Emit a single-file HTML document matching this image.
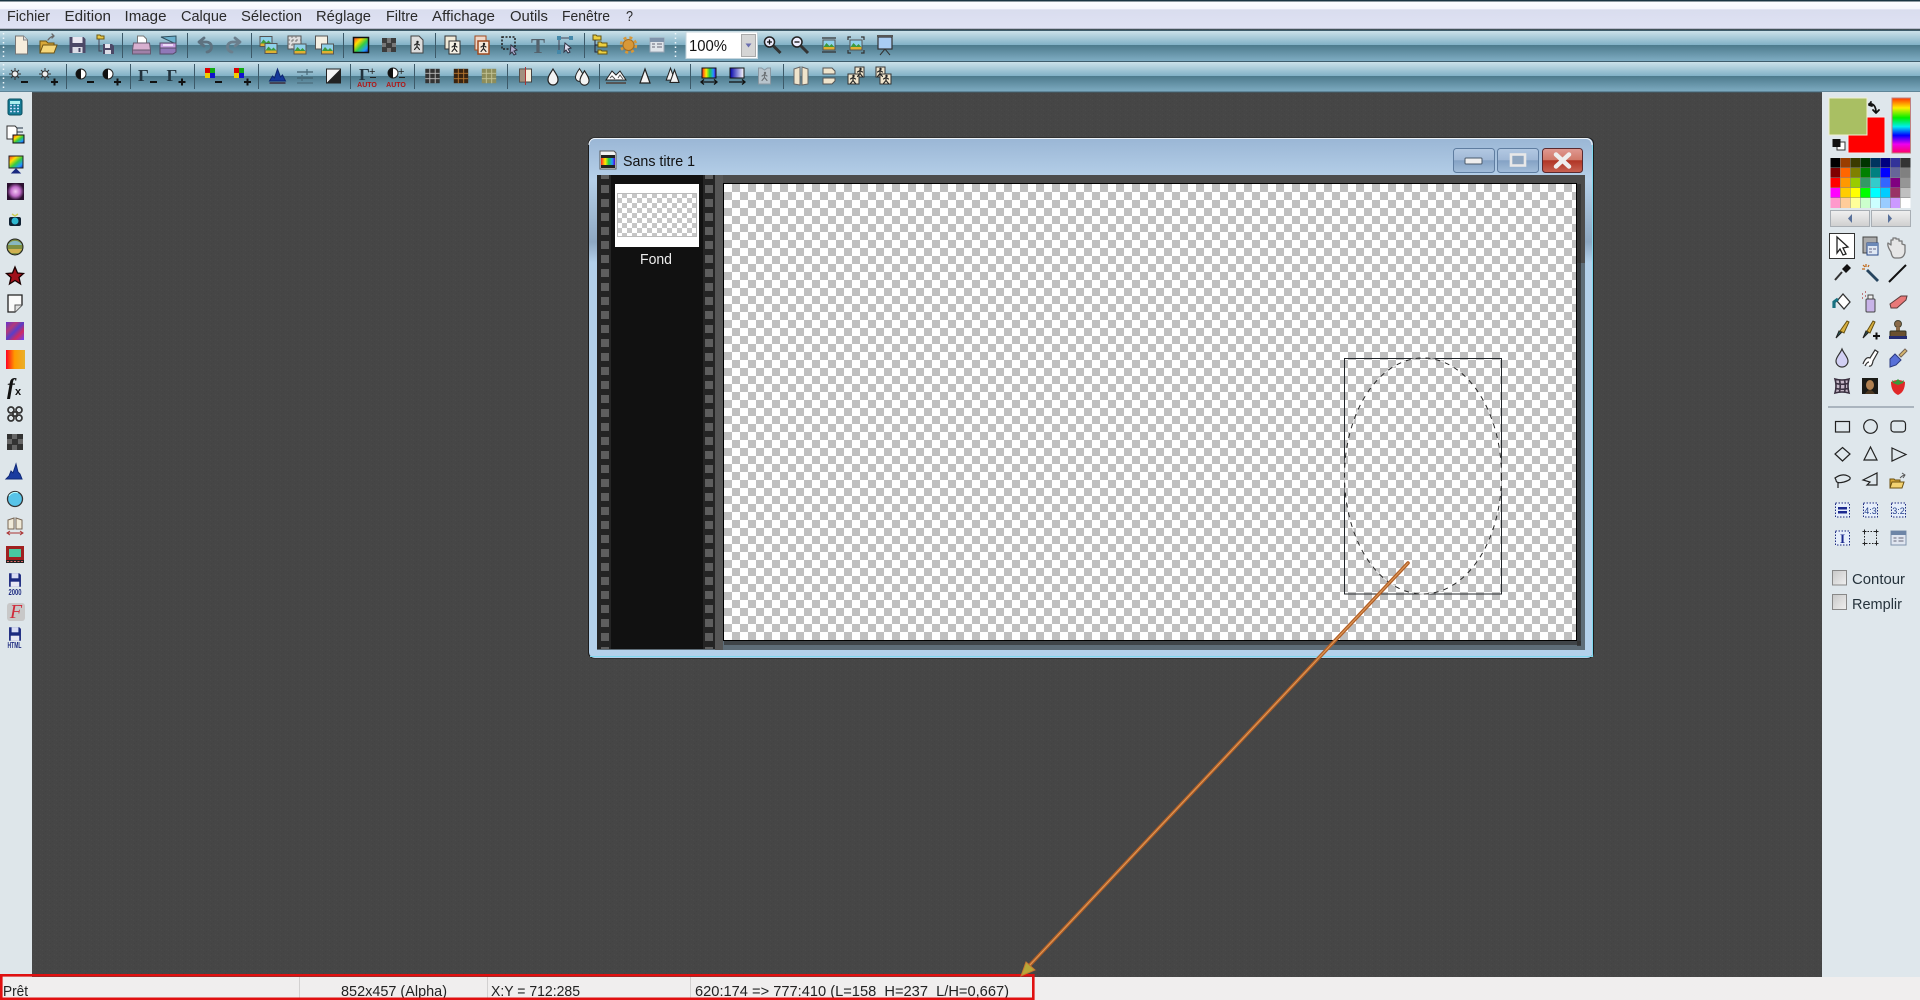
<!DOCTYPE html>
<html lang="fr">
<head>
<meta charset="utf-8">
<title>Sans titre 1</title>
<style>
html,body{margin:0;padding:0;background:#464646;width:1920px;height:1000px;overflow:hidden}
svg{display:block}
text{font-family:"Liberation Sans",sans-serif}
.m{font-size:14.5px;fill:#2a2a2a}
.s{font-size:15px;fill:#222}
.l{fill:none;stroke-linecap:round;stroke-linejoin:round}
</style>
</head>
<body>
<svg xmlns="http://www.w3.org/2000/svg" width="1920" height="1000" viewBox="0 0 1920 1000">
<defs>
<pattern id="noise" width="7" height="5" patternUnits="userSpaceOnUse">
<rect width="7" height="5" fill="#464646"/>
<rect x="0" y="0" width="1" height="1" fill="#4a4a4a"/><rect x="3" y="1" width="1" height="1" fill="#434343"/>
<rect x="1" y="3" width="1" height="1" fill="#434343"/><rect x="5" y="4" width="1" height="1" fill="#4a4a4a"/>
</pattern>
<pattern id="chk" x="724" y="184" width="16" height="16" patternUnits="userSpaceOnUse">
<rect width="16" height="16" fill="#fff"/><rect x="8" width="8" height="8" fill="#c0c0c0"/><rect y="8" width="8" height="8" fill="#c0c0c0"/>
</pattern>
<pattern id="chk2" x="617" y="193" width="10" height="10" patternUnits="userSpaceOnUse">
<rect width="10" height="10" fill="#fff"/><rect x="5" width="5" height="5" fill="#c6c6c6"/><rect y="5" width="5" height="5" fill="#c6c6c6"/>
</pattern>
<pattern id="rail" x="597" y="175" width="14" height="14" patternUnits="userSpaceOnUse">
<rect width="14" height="14" fill="#242424"/><rect x="4" y="10" width="8" height="8" fill="#5e5e5e"/><rect x="4" y="-4" width="8" height="8" fill="#5e5e5e"/>
</pattern>
<pattern id="rail2" x="703" y="175" width="12" height="14" patternUnits="userSpaceOnUse">
<rect width="12" height="14" fill="#242424"/><rect x="2" y="10" width="8" height="8" fill="#5e5e5e"/><rect x="2" y="-4" width="8" height="8" fill="#5e5e5e"/>
</pattern>
<linearGradient id="tbA" x1="0" y1="0" x2="0" y2="1"><stop offset="0" stop-color="#cbe1e9"/><stop offset="1" stop-color="#82b1c6"/></linearGradient>
<linearGradient id="tbB" x1="0" y1="0" x2="0" y2="1"><stop offset="0" stop-color="#4d7a8c"/><stop offset="1" stop-color="#7fadc3"/></linearGradient>
<linearGradient id="menu" x1="0" y1="0" x2="0" y2="1"><stop offset="0" stop-color="#fff"/><stop offset=".3" stop-color="#f6f7fc"/><stop offset=".34" stop-color="#d9ddee"/><stop offset="1" stop-color="#e0e2f4"/></linearGradient>
<linearGradient id="win" x1="0" y1="0" x2="0" y2="1"><stop offset="0" stop-color="#9ab6d5"/><stop offset=".08" stop-color="#b6d0e9"/><stop offset=".2" stop-color="#8ea8c2"/><stop offset=".24" stop-color="#b3d0ea"/><stop offset="1" stop-color="#b4d1eb"/></linearGradient>
<linearGradient id="rb" x1="0" y1="0" x2="1" y2="1"><stop offset="0" stop-color="#f33"/><stop offset=".3" stop-color="#fd0"/><stop offset=".55" stop-color="#3c4"/><stop offset=".8" stop-color="#29f"/><stop offset="1" stop-color="#22a"/></linearGradient>
<linearGradient id="rbh" x1="0" y1="0" x2="1" y2="0"><stop offset="0" stop-color="#f22"/><stop offset=".3" stop-color="#fe0"/><stop offset=".55" stop-color="#2c4"/><stop offset=".8" stop-color="#29f"/><stop offset="1" stop-color="#50c"/></linearGradient>
<linearGradient id="hue" x1="0" y1="0" x2="0" y2="1"><stop offset="0" stop-color="#f30"/><stop offset=".18" stop-color="#fe0"/><stop offset=".36" stop-color="#0e0"/><stop offset=".52" stop-color="#0ee"/><stop offset=".68" stop-color="#00f"/><stop offset=".84" stop-color="#e0e"/><stop offset="1" stop-color="#f06"/></linearGradient>
<linearGradient id="org" x1="0" y1="0" x2="1" y2="0"><stop offset="0" stop-color="#f02"/><stop offset=".45" stop-color="#f90"/><stop offset="1" stop-color="#e8b02c"/></linearGradient>
<linearGradient id="pur" x1="0" y1="0" x2="1" y2="1"><stop offset="0" stop-color="#63c"/><stop offset=".3" stop-color="#b23a7a"/><stop offset=".5" stop-color="#5a3ec8"/><stop offset=".72" stop-color="#d02a60"/><stop offset="1" stop-color="#64f"/></linearGradient>
<linearGradient id="bl" x1="0" y1="0" x2="1" y2="0"><stop offset="0" stop-color="#00a"/><stop offset="1" stop-color="#fff"/></linearGradient>
<radialGradient id="glow"><stop offset="0" stop-color="#f4c8f4"/><stop offset=".55" stop-color="#c06cc8"/><stop offset="1" stop-color="#2b1030"/></radialGradient>
<linearGradient id="btn" x1="0" y1="0" x2="0" y2="1"><stop offset="0" stop-color="#b3c9e2"/><stop offset=".48" stop-color="#a0b8d6"/><stop offset=".5" stop-color="#84a2c4"/><stop offset="1" stop-color="#a3bdd9"/></linearGradient>
<linearGradient id="cls" x1="0" y1="0" x2="0" y2="1"><stop offset="0" stop-color="#e09a92"/><stop offset=".48" stop-color="#d07868"/><stop offset=".5" stop-color="#b03424"/><stop offset="1" stop-color="#c86454"/></linearGradient>
<linearGradient id="gbtn" x1="0" y1="0" x2="0" y2="1"><stop offset="0" stop-color="#f0f0f0"/><stop offset="1" stop-color="#cfcfcf"/></linearGradient>
<linearGradient id="cb" x1="0" y1="0" x2="1" y2="1"><stop offset="0" stop-color="#c8c8c8"/><stop offset="1" stop-color="#f0f0f0"/></linearGradient>

<g id="land"><rect x="-6" y="-5" width="12" height="10" fill="#8fd0ea" stroke="#555"/><path d="M-5.500 2l3-4 3 3 2-2 3 3v2.500h-11z" fill="#3d9a3d"/><rect x="-5.500" y="2" width="11" height="2.500" fill="#e0b030"/></g>
<g id="man"><circle cx="0.500" cy="-4" r="1.200" fill="#222"/><path class="l" d="M0-2.500v3l2.500 3M0 .5l-2.500 3M-2.500-1l2.500-1.500 2.500 1.500" stroke="#222" stroke-width="1.100"/></g>
<g id="floppy"><path d="M-7-8h12l2 2v14h-14z" fill="#1c2a80"/><rect x="-4" y="-8" width="8" height="6" fill="#d8dcf4"/><rect x="-5" y="2" width="10" height="6" fill="#e8e8f4"/></g>
<g id="sun"><circle cx="-3" cy="-2" r="3" fill="#eee" stroke="#333"/><path d="M-3-8v2.500M-3 1.500v2.500M-9-2h2.500M.5-2h2.500M-7-6l2 2M-1 0l2 2M-7 2l2-2M-1-4l2-2" stroke="#333"/></g>
<g id="half"><circle cx="-3" cy="-2" r="5" fill="#fff" stroke="#222"/><path d="M-3-7a5 5 0 0 0 0 10z" fill="#111"/></g>
<g id="gam"><text x="-9" y="5" font-size="17" font-weight="bold" fill="#22323c" style="font-family:'Liberation Serif',serif">Γ</text></g>
<g id="rgb"><rect x="-7" y="-8" width="5" height="5" fill="#d00"/><rect x="-2" y="-8" width="5" height="5" fill="#1a1"/><rect x="-7" y="-3" width="5" height="5" fill="#ec0"/><rect x="-2" y="-3" width="5" height="5" fill="#11c"/></g>
<g id="minus"><rect x="3" y="5" width="7" height="2" fill="#111"/></g>
<g id="plus"><path d="M3 6h7M6.500 2.500v7" stroke="#111" stroke-width="2"/></g>
<g id="grid"><rect x="-8" y="-8" width="16" height="16" fill="#333"/><path d="M-8-3h16M-8 3h16M-3-8v16M3-8v16" stroke="#bbb" stroke-width="1"/></g>
<g id="drop"><path d="M0-8C3-3 5-1 5 3a5 5 0 0 1-10 0C-5-1-3-3 0-8z" fill="#f4f4f4" stroke="#222" stroke-width="1.200"/></g>
<g id="tri"><path d="M0-8L5 6h-10z" fill="#f4f4f4" stroke="#222" stroke-width="1.200"/></g>
<g id="grip"><line x1="3.500" y1="33" x2="3.500" y2="59" stroke="#eef6fa" stroke-width="1.500" stroke-dasharray="1.500 3"/></g>
</defs>

<!-- background -->
<rect width="1920" height="1000" fill="url(#noise)"/>

<!-- menu -->
<rect y="0" width="1920" height="29" fill="url(#menu)"/>
<rect y="0" width="1920" height="1.500" fill="#1a3540"/>
<rect y="28" width="1920" height="1" fill="#b6bacb"/>
<text class="m" x="7" y="21" textLength="43" lengthAdjust="spacingAndGlyphs">Fichier</text>
<text class="m" x="64.500" y="21" textLength="46.500" lengthAdjust="spacingAndGlyphs">Edition</text>
<text class="m" x="124.500" y="21" textLength="42" lengthAdjust="spacingAndGlyphs">Image</text>
<text class="m" x="181" y="21" textLength="46" lengthAdjust="spacingAndGlyphs">Calque</text>
<text class="m" x="241" y="21" textLength="61" lengthAdjust="spacingAndGlyphs">Sélection</text>
<text class="m" x="316" y="21" textLength="55" lengthAdjust="spacingAndGlyphs">Réglage</text>
<text class="m" x="386" y="21" textLength="32" lengthAdjust="spacingAndGlyphs">Filtre</text>
<text class="m" x="432" y="21" textLength="63" lengthAdjust="spacingAndGlyphs">Affichage</text>
<text class="m" x="510" y="21" textLength="38" lengthAdjust="spacingAndGlyphs">Outils</text>
<text class="m" x="562" y="21" textLength="48" lengthAdjust="spacingAndGlyphs">Fenêtre</text>
<text class="m" x="626" y="21" textLength="7" lengthAdjust="spacingAndGlyphs">?</text>

<!-- toolbars -->
<rect y="29.500" width="1920" height="1.500" fill="#3e5c6b"/>
<rect y="31" width="1920" height="14" fill="url(#tbA)"/>
<rect y="45" width="1920" height="16" fill="url(#tbB)"/>
<rect y="61" width="1920" height="1" fill="#3e5c6b"/>
<rect y="62" width="1920" height="14" fill="url(#tbA)"/>
<rect y="76" width="1920" height="16" fill="url(#tbB)"/>
<rect y="91.500" width="1920" height="1" fill="#41606f"/>
<use href="#grip"/><use href="#grip" y="31"/><use href="#grip" x="672"/>
<path d="M122.500 33v25M187.500 33v25M251.500 33v25M343.500 33v25M435.500 33v25M584.500 33v25M66.500 64v25M130.500 64v25M194.500 64v25M258.500 64v25M350.500 64v25M414.500 64v25M507.500 64v25M599.500 64v25M690.500 64v25M783.500 64v25" stroke="#3d5a69"/>

<!-- toolbar 1 icons -->
<g transform="translate(21.500,45)"><path d="M-6-9h8l4 4v14h-12z" fill="#f6eddc" stroke="#777"/><path d="M2-9v4h4" fill="#ddd" stroke="#888"/></g>
<g transform="translate(49,45)"><path d="M-9 8V-4h6l2 2h6v3" fill="#d8a838" stroke="#6e5210"/><path d="M-9 8l3-8h14l-3 8z" fill="#f5d77a" stroke="#6e5210"/><path class="l" d="M-1-5q3-4 6-4M3-11l2 2-2 2" stroke="#6a6a6a" stroke-width="1.300"/></g>
<g transform="translate(77.500,45)"><path d="M-8-8h14l2 2v14h-16z" fill="#4b4866"/><rect x="-5" y="-8" width="10" height="6" fill="#e8e6f0"/><rect x="-5" y="2" width="10" height="6" fill="#dcdce6"/><rect x="1" y="3" width="2" height="4" fill="#4b4866"/></g>
<g transform="translate(105,45)"><path d="M-8-10h3l1 1h3v3h-7z" fill="#e8c84a" stroke="#6e5a10"/><path d="M-6-6v12h3" fill="none" stroke="#445"/><path d="M-2-1h9l2 2v8h-11z" fill="#4b4866"/><rect x="0" y="-1" width="5" height="4" fill="#e8e6f0"/><rect x="0" y="5" width="6" height="4" fill="#dcdce6"/></g>
<g transform="translate(141.500,45)"><path d="M-4-9h6l3 3v5h-9z" fill="#fff" stroke="#777"/><path d="M-8-2H8l1 7H-9z" fill="#d8b0d0" stroke="#665a70"/><rect x="-9" y="5" width="18" height="4" fill="#a080a8" stroke="#665a70"/></g>
<g transform="translate(168,45)"><path d="M-7-8L8-9V-1z" fill="#6bb0cc" stroke="#2f4f5f"/><path d="M-8-2H8V3H-8z" fill="#c8a0e0" stroke="#554a66"/><path d="M-8 3H8V7L5 9H-8z" fill="#9078b8" stroke="#554a66"/><rect x="-5" y="-1" width="10" height="2" fill="#ecdcf8"/></g>
<g transform="translate(206,45)"><path class="l" d="M-2-7-7-3l5 4M-6-3h6a5 5 0 0 1 1 10" stroke="#5e7280" stroke-width="2.800"/></g>
<g transform="translate(233,45)"><path class="l" d="M2-7 7-3 2 1M6-3H0a5 5 0 0 0-1 10" stroke="#6b7f8d" stroke-width="2.800"/></g>
<g transform="translate(268.500,45)"><use href="#land" x="-2.500" y="-3.500"/><use href="#land" x="2.500" y="3.500"/></g>
<g transform="translate(297,45)"><rect x="-9" y="-9" width="13" height="13" fill="#ddd" stroke="#555"/><path d="M-9-5h13M-9-1h13M-5-9v13M-1-9v13" stroke="#777" stroke-dasharray="2 2"/><use href="#land" x="3" y="4"/></g>
<g transform="translate(324.500,45)"><rect x="-9" y="-9" width="12" height="13" fill="#f4efe2" stroke="#555"/><use href="#land" x="3" y="4"/></g>
<g transform="translate(361,45)"><rect x="-7.500" y="-7.500" width="15" height="15" fill="url(#rb)" stroke="#111" stroke-width="1.500"/></g>
<g transform="translate(389,45)"><rect x="-7" y="-7" width="14" height="14" fill="#3c3c3c"/><path d="M-2-7h4v5h-4zM3-2h4v4H3zM-7-2h4v4h-4zM-2 3h4v4h-4z" fill="#777"/></g>
<g transform="translate(417,45)"><path d="M-6-9h8l4 4v13h-12z" fill="#ddd" stroke="#444"/><use href="#man" y="1"/></g>
<g transform="translate(453,45)"><rect x="-8" y="-9" width="11" height="13" fill="#f0ead8" stroke="#333"/><rect x="-4" y="-4" width="11" height="13" fill="#f6f2e6" stroke="#333"/><use href="#man" x="1.500" y="3"/></g>
<g transform="translate(482,45)"><rect x="-7" y="-9" width="11" height="14" fill="#eed7c8" stroke="#a04a20"/><rect x="-4" y="-4" width="11" height="13" fill="#f6e8da" stroke="#a04a20" stroke-width="1.500"/><use href="#man" x="1.500" y="3"/></g>
<g transform="translate(509,45)"><rect x="-7" y="-8" width="13" height="12" fill="none" stroke="#222" stroke-width="1.500" stroke-dasharray="2 1.500"/><path d="M2 0l6 5-3 1 2 3-2 1-2-3-2 2z" fill="#aac" stroke="#334"/></g>
<text x="538" y="53" text-anchor="middle" font-size="21" font-weight="bold" fill="#55626c" style="font-family:'Liberation Serif',serif">T</text>
<g transform="translate(565,45)"><path d="M-6-7H6M-6-7V7" stroke="#445" fill="none"/><rect x="-8" y="-9" width="4" height="4" fill="#48a"/><rect x="4" y="-9" width="4" height="4" fill="#48a"/><rect x="-8" y="5" width="4" height="4" fill="#48a"/><path d="M0-2l6 5-3 1 2 3-2 1-2-3-2 2z" fill="#dde" stroke="#334"/></g>
<g transform="translate(601,45)"><path d="M-8-10h3l1 1h4v4h-8z" fill="#ecd040" stroke="#665510"/><path d="M-6-5V7h3M-6 0h3" fill="none" stroke="#223"/><path d="M-3-3h3l1 1h5v4H-3z" fill="#ecd040" stroke="#665510"/><path d="M-3 5h3l1 1h5v3H-3z" fill="#ecd040" stroke="#665510"/></g>
<g transform="translate(628.500,45)"><circle r="5.500" fill="#d89838" stroke="#a86c1c" stroke-width="1"/><circle r="7.500" fill="none" stroke="#d89838" stroke-width="2.500" stroke-dasharray="3 3"/></g>
<g transform="translate(657,45)"><rect x="-7" y="-7" width="14" height="14" fill="#dfe4ea" stroke="#9aa6b4"/><rect x="-7" y="-7" width="14" height="4" fill="#7f93ab"/><path d="M-5-1h3M0-1h5M-5 2h3M0 2h5" stroke="#667"/></g>
<!-- zoom combo -->
<rect x="686" y="32" width="71.500" height="26.500" fill="#fff" stroke="#c6d6de"/>
<text x="689" y="51" font-size="16" fill="#111" textLength="38" lengthAdjust="spacingAndGlyphs">100%</text>
<rect x="741.500" y="34.500" width="14" height="22" fill="#d5d5d5" stroke="#aaa"/>
<path d="M745.500 43.500h6l-3 4z" fill="#6a6eb0"/>
<g transform="translate(772.500,45)"><circle cx="-3" cy="-3" r="5" fill="#eef" stroke="#222" stroke-width="1.500"/><path d="M-5.500-3h5M-3-5.500v5" stroke="#111" stroke-width="1.300"/><path d="M1 1l7 7" stroke="#333" stroke-width="3"/></g>
<g transform="translate(800,45)"><circle cx="-3" cy="-3" r="5" fill="#eef" stroke="#222" stroke-width="1.500"/><path d="M-5.500-3h5" stroke="#111" stroke-width="1.300"/><path d="M1 1l7 7" stroke="#333" stroke-width="3"/></g>
<g transform="translate(829,45)"><use href="#land"/><path d="M-7-7H7M-7 7H7" stroke="#333" stroke-width="1.200" fill="none"/></g>
<g transform="translate(856,45)"><use href="#land"/><path d="M-8-5v-3h3M5-8h3v3M-8 5v3h3M5 8h3v-3" stroke="#333" stroke-width="1.200" fill="none"/></g>
<g transform="translate(885,44)"><rect x="-7" y="-7" width="14" height="12" fill="#a9ccf2" stroke="#333" stroke-width="1.200"/><rect x="-8" y="-9" width="16" height="2" fill="#555"/><path d="M0 5l-5 6M0 5l5 6" stroke="#333"/></g>

<!-- toolbar 2 icons -->
<g transform="translate(18,76)"><use href="#sun"/><use href="#minus"/></g>
<g transform="translate(48,76)"><use href="#sun"/><use href="#plus"/></g>
<g transform="translate(84,76)"><use href="#half"/><use href="#minus"/></g>
<g transform="translate(111,76)"><use href="#half"/><use href="#plus"/></g>
<g transform="translate(147,76)"><use href="#gam"/><use href="#minus"/></g>
<g transform="translate(175.500,76)"><use href="#gam"/><use href="#plus"/></g>
<g transform="translate(212,76)"><use href="#rgb"/><use href="#minus"/></g>
<g transform="translate(241,76)"><use href="#rgb"/><use href="#plus"/></g>
<g transform="translate(277.500,76)"><path d="M-8 5l3-5 2 2 3-9 3 8 2-2 3 6z" fill="#14389a" stroke="#0d2570"/><path d="M-8 7H8" stroke="#445" stroke-width="2"/></g>
<g transform="translate(305,76)"><path d="M-8-4H8M-8 2H8" stroke="#42606e" stroke-width="1.300"/><path d="M2-7v6M-3-1v6M-8 7H8" stroke="#4c6e7e" stroke-width="1.300"/></g>
<g transform="translate(333.500,76)"><rect x="-7" y="-7" width="14" height="14" fill="#f4f4f4" stroke="#222"/><path d="M7-7V7H-7z" fill="#222"/></g>
<g transform="translate(367,76)"><use href="#gam" x="1" y="-1"/><text x="2" y="-1" font-size="11" fill="#222">+</text><rect x="3" y="1" width="6" height="1" fill="#222"/><text x="0" y="11" text-anchor="middle" font-size="7" font-weight="bold" fill="#b01616">AUTO</text></g>
<g transform="translate(396,76)"><circle cx="-3" cy="-3" r="5" fill="#fff" stroke="#222"/><path d="M-3-8a5 5 0 0 0 0 10z" fill="#111"/><text x="2" y="-1" font-size="11" fill="#222">+</text><rect x="3" y="1" width="6" height="1" fill="#222"/><text x="0" y="11" text-anchor="middle" font-size="7" font-weight="bold" fill="#b01616">AUTO</text></g>
<use href="#grid" transform="translate(432.500,76) scale(.9)"/>
<g transform="translate(461,76) scale(.9)"><rect x="-8" y="-8" width="16" height="16" fill="#3a2410"/><path d="M-8-3H8M-8 3H8M-3-8V8M3-8V8" stroke="#b87830"/></g>
<g transform="translate(489,76) scale(.9)"><rect x="-8" y="-8" width="16" height="16" fill="#8d8d5a"/><path d="M-8-3H8M-8 3H8M-3-8V8M3-8V8" stroke="#c4c496"/></g>
<g transform="translate(525.500,76)"><rect x="-6" y="-7" width="12" height="13" fill="#f4ecd8" stroke="#444"/><rect x="-6" y="-7" width="6" height="13" fill="#7e6a58" opacity=".7"/><path d="M0-9V9" stroke="#a33"/></g>
<use href="#drop" x="553" y="77"/>
<g transform="translate(581.500,76)"><use href="#drop" transform="translate(-2,-1) scale(.8)"/><use href="#drop" transform="translate(3,2) scale(.9)"/></g>
<g transform="translate(616,76)"><path d="M-10 4L-4-5 0-1 4-5 10 4z" fill="#fff" stroke="#222"/><path d="M-10 7H10" stroke="#555" stroke-width="2"/><path d="M-6 2l2-2 3 3M2 2l2-3 3 4" stroke="#555" fill="none"/></g>
<use href="#tri" x="645" y="77"/>
<g transform="translate(672.500,76)"><use href="#tri" transform="translate(-2,-1) scale(.85)"/><use href="#tri" transform="translate(2,1) scale(.9)"/></g>
<g transform="translate(709,76)"><rect x="-7" y="-8" width="14" height="10" fill="url(#rbh)" stroke="#111"/><path d="M-8 6H8M-5 3.500-8 6l3 2.500M5 3.500 8 6l-3 2.500" stroke="#111" fill="none" stroke-width="1.300"/></g>
<g transform="translate(737,76)"><rect x="-7" y="-8" width="14" height="10" fill="url(#bl)" stroke="#111"/><path d="M-8 6H8M5 3.500 8 6l-3 2.500" stroke="#111" fill="none" stroke-width="1.300"/></g>
<g transform="translate(764.500,76)"><path d="M-6-8h3l3 2 3-2h3V8h-12z" fill="#b8c4cc" stroke="#8a98a2"/><use href="#man" opacity=".5" y="1"/></g>
<g transform="translate(801,76)"><path d="M-1-9L-7-7V8L-1 9zM1-9L7-7V8L1 9z" fill="#efe4cc" stroke="#666"/></g>
<g transform="translate(829,76)"><path d="M-6-8H3l3 3v3H-6zM-6 2H6V5L3 8H-6z" fill="#efe4cc" stroke="#555"/></g>
<g transform="translate(856,76)"><rect x="-1" y="-9" width="9" height="10" fill="#efe4cc" stroke="#333"/><rect x="-8" y="-2" width="11" height="10" fill="#efe4cc" stroke="#333"/><use href="#man" x="4" y="-3"/><use href="#man" x="-3" y="4"/></g>
<g transform="translate(884,76)"><rect x="-8" y="-9" width="9" height="10" fill="#efe4cc" stroke="#333"/><rect x="-4" y="-2" width="11" height="10" fill="#efe4cc" stroke="#333"/><use href="#man" x="-4" y="-3"/><use href="#man" x="2" y="4"/></g>

<!-- left sidebar -->
<rect x="0" y="92" width="32" height="885" fill="#dee6ea"/>
<g transform="translate(15,107)"><rect x="-7" y="-8" width="14" height="16" rx="2" fill="#177b95" stroke="#0b4f60"/><rect x="-5" y="-6" width="10" height="3" fill="#aee"/><path d="M-5-1.500H5M-5 1.500H5M-5 4.500H5" stroke="#cdf" stroke-dasharray="2 1.500" stroke-width="1.500"/></g>
<g transform="translate(15,135)"><path d="M-8-9H0l2 2V4H-8z" fill="#fff" stroke="#333"/><rect x="-2" y="0" width="11" height="8" fill="url(#rb)" stroke="#111"/><path d="M2-7H8M2-3H8" stroke="#234" fill="none"/></g>
<g transform="translate(16,164)"><rect x="-7" y="-8" width="14" height="12" fill="url(#rb)" stroke="#222"/><path d="M0 4v3M-4 9H4L0 5z" fill="#1a2a80" stroke="#1a2a80"/></g>
<rect x="7" y="183" width="17" height="17" fill="url(#glow)"/>
<g transform="translate(15,220)"><rect x="-6" y="-3" width="12" height="9" rx="2" fill="#123"/><circle cy="1" r="3.500" fill="#2fb8d0"/><path d="M-3-6l3 2 3-2" stroke="#cc5" fill="none" stroke-width="1.500"/></g>
<g transform="translate(15,247)"><circle r="8" fill="#7e8f42" stroke="#222"/><path d="M-7-2A8 8 0 0 1 7-2z" fill="#88b8c0"/><path d="M-7 2H7L4 6H-4z" fill="#d0b050"/></g>
<path d="M15 267l2.500 6 6 .5-4.500 4 1.500 6.500-5.500-3.500-5.500 3.500 1.500-6.500-4.500-4 6-.5z" fill="#a0101a" stroke="#1a0000" stroke-width="1.300"/>
<path d="M8 295H22V305L15 312H8z" fill="#fafafa" stroke="#222" stroke-width="1.300"/><path d="M22 305H15V312" fill="#ddd" stroke="#555"/>
<rect x="6" y="322" width="18" height="18" fill="url(#pur)"/>
<rect x="6" y="350" width="19" height="19" fill="url(#org)"/>
<text x="7" y="394" font-size="23" font-style="italic" font-weight="bold" fill="#111" style="font-family:'Liberation Serif',serif">f</text><text x="15" y="395" font-size="11" font-weight="bold" fill="#111">x</text>
<g transform="translate(15,414)" fill="none" stroke="#333" stroke-width="1.700"><circle cx="-4" cy="-4" r="3"/><circle cx="4" cy="-4" r="3"/><circle cx="-4" cy="4" r="3"/><circle cx="4" cy="4" r="3"/><rect x="-2" y="-2" width="4" height="4"/></g>
<g transform="translate(15,442)"><rect x="-8" y="-8" width="16" height="16" fill="#333"/><path d="M-3-8h5v5h-5zM3-3h5v5H3zM-8-3h5v5h-5zM-3 3h5v5h-5z" fill="#666"/></g>
<path d="M6 479l3-3 2-5 2 2 3-9 2 8 2 2 2 5z" fill="#1a3ca0" stroke="#102a78"/>
<g transform="translate(15,499)"><circle r="7.500" fill="#58c4e8" stroke="#333" stroke-width="1.300"/><path d="M-6-3A7 7 0 0 1 3-6" stroke="#bff" fill="none"/></g>
<g transform="translate(15,526)"><path d="M-1-8L-7-6V3H-1zM1-8L7-6V3H1z" fill="#f0ead8" stroke="#765"/><path d="M-8 7H8M-5 5-8 7l3 2M5 5 8 7 5 9" stroke="#a33" fill="none"/></g>
<g transform="translate(15,554)"><rect x="-9" y="-8" width="18" height="14" fill="#a02020"/><rect x="-6" y="-5" width="12" height="8" fill="#48c8a0"/><rect x="-9" y="6" width="18" height="3" fill="#222"/><path d="M-8 7.500H8" stroke="#d66" stroke-dasharray="2 1.500"/></g>
<use href="#floppy" transform="translate(15,580) scale(.85)"/><text x="15" y="595" text-anchor="middle" font-size="8" font-weight="bold" fill="#1c2a80" textLength="13" lengthAdjust="spacingAndGlyphs">2000</text>
<g transform="translate(16,612)"><rect x="-9" y="-9" width="18" height="18" rx="3" fill="#c8c8c8"/><text x="0" y="6" text-anchor="middle" font-size="20" font-style="italic" fill="#d02a3a" style="font-family:'Liberation Serif',serif">F</text></g>
<use href="#floppy" transform="translate(15,634) scale(.85)"/><text x="14.500" y="648" text-anchor="middle" font-size="8" font-weight="bold" fill="#1c2a80" textLength="14" lengthAdjust="spacingAndGlyphs">HTML</text>

<!-- right panel -->
<rect x="1822" y="92" width="98" height="885" fill="#dfe7ec"/>
<rect x="1848" y="117" width="37" height="36" fill="#f00" stroke="#eee"/>
<rect x="1829" y="98" width="38" height="37" fill="#a9bf63" stroke="#efefd0"/>
<path class="l" d="M1871 102l-2 3 3 1M1869 104q7-1 7 9M1873 110l3 3 3-3" stroke="#111" stroke-width="1.800"/>
<rect x="1837" y="142" width="8" height="8" fill="#fff" stroke="#333"/><rect x="1832.500" y="139" width="8" height="8" fill="#111"/>
<rect x="1892" y="98" width="18.500" height="55" fill="url(#hue)" stroke="#c08080"/>
<g>
<rect x="1830.500" y="158" width="80" height="50" fill="#888"/>
<rect x="1830.500" y="158" width="9.500" height="9.500" fill="#000"/><rect x="1840.500" y="158" width="9.500" height="9.500" fill="#993d00"/><rect x="1850.500" y="158" width="9.500" height="9.500" fill="#3b3b00"/><rect x="1860.500" y="158" width="9.500" height="9.500" fill="#003300"/><rect x="1870.500" y="158" width="9.500" height="9.500" fill="#00335f"/><rect x="1880.500" y="158" width="9.500" height="9.500" fill="#000080"/><rect x="1890.500" y="158" width="9.500" height="9.500" fill="#333399"/><rect x="1900.500" y="158" width="10" height="9.500" fill="#333"/>
<rect x="1830.500" y="168" width="9.500" height="9.500" fill="#800000"/><rect x="1840.500" y="168" width="9.500" height="9.500" fill="#f60"/><rect x="1850.500" y="168" width="9.500" height="9.500" fill="#808000"/><rect x="1860.500" y="168" width="9.500" height="9.500" fill="#008000"/><rect x="1870.500" y="168" width="9.500" height="9.500" fill="#008080"/><rect x="1880.500" y="168" width="9.500" height="9.500" fill="#00f"/><rect x="1890.500" y="168" width="9.500" height="9.500" fill="#669"/><rect x="1900.500" y="168" width="10" height="9.500" fill="#808080"/>
<rect x="1830.500" y="178" width="9.500" height="9.500" fill="#f00"/><rect x="1840.500" y="178" width="9.500" height="9.500" fill="#f90"/><rect x="1850.500" y="178" width="9.500" height="9.500" fill="#9c0"/><rect x="1860.500" y="178" width="9.500" height="9.500" fill="#396"/><rect x="1870.500" y="178" width="9.500" height="9.500" fill="#3cc"/><rect x="1880.500" y="178" width="9.500" height="9.500" fill="#36f"/><rect x="1890.500" y="178" width="9.500" height="9.500" fill="#800080"/><rect x="1900.500" y="178" width="10" height="9.500" fill="#969696"/>
<rect x="1830.500" y="188" width="9.500" height="9.500" fill="#f0f"/><rect x="1840.500" y="188" width="9.500" height="9.500" fill="#fc0"/><rect x="1850.500" y="188" width="9.500" height="9.500" fill="#ff0"/><rect x="1860.500" y="188" width="9.500" height="9.500" fill="#0f0"/><rect x="1870.500" y="188" width="9.500" height="9.500" fill="#0ff"/><rect x="1880.500" y="188" width="9.500" height="9.500" fill="#0cf"/><rect x="1890.500" y="188" width="9.500" height="9.500" fill="#936"/><rect x="1900.500" y="188" width="10" height="9.500" fill="#c0c0c0"/>
<rect x="1830.500" y="198" width="9.500" height="10" fill="#f9c"/><rect x="1840.500" y="198" width="9.500" height="10" fill="#fc9"/><rect x="1850.500" y="198" width="9.500" height="10" fill="#ff9"/><rect x="1860.500" y="198" width="9.500" height="10" fill="#cfc"/><rect x="1870.500" y="198" width="9.500" height="10" fill="#cff"/><rect x="1880.500" y="198" width="9.500" height="10" fill="#9cf"/><rect x="1890.500" y="198" width="9.500" height="10" fill="#c9f"/><rect x="1900.500" y="198" width="10" height="10" fill="#fff"/>
</g>
<rect x="1830.500" y="210.500" width="39" height="16" fill="url(#gbtn)" stroke="#a8aeb4"/><rect x="1871.500" y="210.500" width="39" height="16" fill="url(#gbtn)" stroke="#a8aeb4"/>
<path d="M1852 214v9l-4-4.500z" fill="#58709a"/><path d="M1888 214v9l4-4.500z" fill="#58709a"/>

<!-- tools -->
<rect x="1829.500" y="233.500" width="25" height="25" fill="#fff" stroke="#333"/>
<path d="M1837 237l11 10-5 1 3 6-3 1-3-6-3 4z" fill="#fff" stroke="#222" stroke-width="1.300"/>
<g transform="translate(1870,246)"><rect x="-7" y="-9" width="14" height="16" fill="#aaa" stroke="#444"/><rect x="-3" y="-3" width="11" height="12" fill="#dfe8f4" stroke="#2a4a8a"/><rect x="-3" y="-3" width="11" height="3" fill="#6a88b8"/><path d="M-1 3h3M3 3h3M-1 6h3" stroke="#668"/></g>
<path d="M1891 252q-4-6-3-9l3 2v-5l2 0v-2h3v1l3 0v2l3 0v3l3 1v7q-1 6-6 6h-4q-3 0-4-6z" fill="#e6e6e6" stroke="#777" stroke-width="1.300" stroke-linejoin="round"/>
<g transform="translate(1842,273)"><path d="M-7 7l7-8" stroke="#333" stroke-width="2"/><path d="M0-4l4 4 5-5-4-4z" fill="#111"/></g>
<g transform="translate(1870,273)"><path d="M-3-3L8 8" stroke="#27455f" stroke-width="2.800"/><path d="M-8-4h3M-4-9v3M-7-8l2 2M-1-8l-1 2" stroke="#c06818" stroke-width="1.200"/></g>
<path d="M1889 282L1906 265" stroke="#111" stroke-width="2"/>
<g transform="translate(1842,302)"><path d="M-5-1l6-7 7 8-6 7z" fill="#fff" stroke="#333" stroke-width="1.300"/><path d="M-8 6V0l4-3" stroke="#187080" stroke-width="3.200" fill="none"/></g>
<g transform="translate(1870,302)"><rect x="-4" y="-3" width="9" height="13" rx="1" fill="#c8b4e8" stroke="#444"/><rect x="-2" y="-7" width="5" height="4" fill="#eee" stroke="#444"/><path d="M-5-6h1M-8-8h1M-8-4h1M-5-10h1" stroke="#a33" stroke-width="1.300"/></g>
<g transform="translate(1898,302)"><path d="M-8 2L3-6h6l-1 4-9 8h-6z" fill="#e87878" stroke="#5a3a3a"/></g>
<g transform="translate(1842,330)"><path d="M-6 8l3-7 3 1z" fill="#2a5a5a" stroke="#222"/><path d="M-2 1L5-9l2 1-5 11z" fill="#d8b040" stroke="#665010"/></g>
<g transform="translate(1870,330)"><path d="M-7 8l3-7 3 1z" fill="#2a4a4a" stroke="#222"/><path d="M-3 1L3-9l2 1-5 11z" fill="#d8b040" stroke="#665010"/><path d="M3 6h7M6.500 2.500v7" stroke="#111" stroke-width="2"/></g>
<g transform="translate(1898,330)"><circle cy="-6" r="3.500" fill="#8a6a48" stroke="#443"/><rect x="-2" y="-3" width="4" height="4" fill="#8a6a48"/><rect x="-8" y="1" width="16" height="6" rx="1" fill="#6a5030" stroke="#332"/><rect x="-9" y="6" width="18" height="3" fill="#242c70"/></g>
<g transform="translate(1842,358)"><path d="M0-9C2-4 6-1 6 3a6 6 0 0 1-12 0C-6-1-2-4 0-9z" fill="#d2d0f4" stroke="#333" stroke-width="1.200"/></g>
<g transform="translate(1870,358)"><path d="M-7 6q3-8 7-6l5-8 3 2-5 9q-1 6-4 5M-5 8q2-4 4-4" fill="#fff" stroke="#333" stroke-width="1.200"/></g>
<g transform="translate(1898,358)"><path d="M-8 1l5-5 6 6-5 5-6 2z" fill="#5870d8" stroke="#2a3a80"/><path d="M1-3l6-6 2 2-6 6z" fill="#d8b870" stroke="#765"/></g>
<g transform="translate(1842,386)" fill="none" stroke="#3a3040" stroke-width="1.600"><path d="M-7-7Q0-5 7-7Q5 0 7 7Q0 5-7 7Q-5 0-7-7z" fill="#c6b8c8"/><path d="M-6-2.500Q0-1 6-2.500M-6 2.500Q0 4 6 2.500M-2.500-6Q-1 0-2.500 6M2.500-6Q4 0 2.500 6"/></g>
<g transform="translate(1870,386)"><rect x="-8" y="-8" width="16" height="16" fill="#1a1a16"/><ellipse cy="-1" rx="4" ry="5" fill="#b08050"/><path d="M-5 8q5-8 10 0z" fill="#4a3620"/></g>
<g transform="translate(1898,386)"><path d="M-7-4Q0-8 7-4Q7 6 0 9Q-7 6-7-4z" fill="#e02828"/><path d="M-6-6l3 2 3-3 3 3 3-2-1 3-5 2-5-2z" fill="#3a9a3a"/></g>
<path d="M1828 407H1914" stroke="#5a6a78" stroke-width="1" opacity=".8"/>

<!-- shape tools -->
<g fill="none" stroke="#222" stroke-width="1.200">
<rect x="1835.500" y="421.500" width="14" height="10.500"/>
<circle cx="1870.500" cy="426.500" r="6.800"/>
<rect x="1891" y="421" width="14.500" height="11" rx="3"/>
<path d="M1842.500 447.500l7.500 6.500-7.500 7-7.500-7z"/>
<path d="M1870.500 447l6.500 13h-13z"/>
<path d="M1892 448l14 6.500-14 6.500z"/>
<path d="M1835 478q7-5 13-2t-4 6q-8 2-8-2zM1838 483v5"/>
<path d="M1863 480l14-7v12h-10l3-3z"/>
</g>
<g transform="translate(1898,481)"><path d="M-8 7V-2h4l1 1h5v3" fill="#d8a838" stroke="#6e5210"/><path d="M-8 7l2-6h12l-2 6z" fill="#f3d271" stroke="#6e5210"/><path d="M2-3q3-3 5-3M4-8l3 2-2 3" stroke="#555" fill="none"/></g>
<g fill="#fff" stroke="#1c2a80" stroke-width="1" stroke-dasharray="1.500 1.500">
<rect x="1835.500" y="503" width="14" height="14" fill="#e6eefa"/><rect x="1863.500" y="503" width="14" height="14" fill="#e6eefa"/><rect x="1891.500" y="503" width="14" height="14" fill="#e6eefa"/><rect x="1835.500" y="531" width="14" height="14" fill="#e6eefa"/>
</g>
<path d="M1838 507h9v2.500h-9zM1838 511h9v2.500h-9z" fill="#1c2a90"/>
<text x="1870.500" y="514" text-anchor="middle" font-size="9" fill="#24408c">4:3</text>
<text x="1898.500" y="514" text-anchor="middle" font-size="9" fill="#24408c">3:2</text>
<text x="1842.500" y="543" text-anchor="middle" font-size="13" font-weight="bold" fill="#1c2a90" style="font-family:'Liberation Serif',serif">I</text>
<g stroke="#222"><rect x="1864.500" y="531.500" width="12" height="12" fill="none" stroke-dasharray="1.500 1.500"/><path d="M1862.500 531.500h4M1864.500 529.500v4M1874.500 531.500h4M1876.500 529.500v4M1862.500 543.500h4M1864.500 541.500v4M1874.500 543.500h4M1876.500 541.500v4"/></g>
<g transform="translate(1898.500,538)"><rect x="-7.500" y="-7" width="15" height="14" fill="#e0e6f0" stroke="#7f93ab"/><rect x="-7.500" y="-7" width="15" height="4" fill="#6d85a6"/><path d="M-5 0h3M0 0h5M-5 3h3M0 3h5" stroke="#667"/></g>

<!-- checkboxes -->
<rect x="1832.500" y="570.500" width="14" height="14.500" fill="url(#cb)" stroke="#888"/><rect x="1832.500" y="594.500" width="14" height="15" fill="url(#cb)" stroke="#888"/>
<text x="1852" y="584" font-size="15" fill="#26333c" textLength="53" lengthAdjust="spacingAndGlyphs">Contour</text>
<text x="1852" y="609" font-size="15" fill="#26333c" textLength="50" lengthAdjust="spacingAndGlyphs">Remplir</text>

<!-- document window -->
<rect x="588" y="137.500" width="1006" height="521" rx="6" fill="#1c1c1c"/>
<rect x="589" y="138" width="1004" height="520" rx="6" fill="url(#win)"/>
<path d="M589 145a6 6 0 0 1 6-6.500H1586a6 6 0 0 1 6 6.500" fill="none" stroke="#eef4fa"/>
<path d="M1592.500 145V656.500H590" fill="none" stroke="#7fd8ee"/>
<rect x="597" y="175" width="988" height="475" fill="#5e6d78"/>
<rect x="597" y="175" width="988" height="88" fill="#4c4c4c"/>
<rect x="715" y="175" width="8" height="475" fill="#565656"/>
<rect x="1577" y="184" width="4" height="462" fill="#2e2e2e" opacity=".75"/>
<rect x="724" y="641" width="857" height="4" fill="#2e2e2e" opacity=".65"/>
<rect x="597" y="175" width="118" height="474" fill="#111"/>
<rect x="597" y="175" width="14" height="474" fill="url(#rail)"/>
<rect x="703" y="175" width="12" height="474" fill="url(#rail2)"/>
<rect x="615" y="184" width="84" height="63" fill="#fff"/>
<rect x="617.500" y="193.500" width="79" height="43" fill="url(#chk2)" stroke="#bbb"/>
<text x="656" y="264" text-anchor="middle" font-size="15" fill="#eee" textLength="32" lengthAdjust="spacingAndGlyphs">Fond</text>
<rect x="723.500" y="183.500" width="853" height="457" fill="url(#chk)" stroke="#000"/>

<!-- title bar -->
<g transform="translate(608,160)"><path d="M-8-9H6l2 2V9H-8z" fill="#f2f2f2" stroke="#555"/><rect x="-7" y="-5" width="14" height="3" fill="#222"/><rect x="-7" y="-2" width="14" height="7" fill="url(#rbh)"/><rect x="-7" y="5" width="14" height="3" fill="#222"/></g>
<text x="623" y="166" font-size="15" fill="#111" textLength="72" lengthAdjust="spacingAndGlyphs">Sans titre 1</text>
<rect x="1453.500" y="148.500" width="41" height="24" rx="3" fill="url(#btn)" stroke="#5f7da0"/>
<rect x="1465" y="158" width="17" height="6" rx="1" fill="#eee" stroke="#4a5a6c"/>
<rect x="1497.500" y="148.500" width="41" height="24" rx="3" fill="url(#btn)" stroke="#5f7da0"/>
<rect x="1511" y="154.500" width="14" height="11" fill="#8fa6c0" stroke="#e8e8e8" stroke-width="2.600"/>
<rect x="1542.500" y="148.500" width="40" height="24" rx="3" fill="url(#cls)" stroke="#5a2a30"/>
<path d="M1556 154.500l13 12M1569 154.500l-13 12" stroke="#eee" stroke-width="4.500" stroke-linecap="round"/>

<!-- selection -->
<rect x="1344.500" y="358.500" width="157" height="235.500" fill="none" stroke="#22262a"/>
<ellipse cx="1423" cy="476" rx="78.500" ry="118" fill="none" stroke="#fff" stroke-opacity=".75"/>
<ellipse cx="1423" cy="476" rx="78.500" ry="118" fill="none" stroke="#222" stroke-dasharray="5 5"/>

<!-- status bar -->
<rect x="0" y="977" width="1920" height="23" fill="#f0eeee"/>
<path d="M299.500 977v23M487.500 977v23M690.500 977v23" stroke="#d2d0d0"/>
<text class="s" x="3" y="996" textLength="25" lengthAdjust="spacingAndGlyphs">Prêt</text>
<text class="s" x="341" y="996" textLength="106" lengthAdjust="spacingAndGlyphs">852x457 (Alpha)</text>
<text class="s" x="491" y="996" textLength="89" lengthAdjust="spacingAndGlyphs">X:Y = 712:285</text>
<text class="s" x="695" y="996" textLength="314" lengthAdjust="spacingAndGlyphs" xml:space="preserve">620:174 =&gt; 777:410 (L=158  H=237  L/H=0,667)</text>
<rect x="1.300" y="975.300" width="1032" height="23.500" fill="none" stroke="#e01010" stroke-width="2.600"/>

<!-- arrow -->
<path d="M1408 563L1028 967" stroke="#b05e26" stroke-width="3.600" stroke-linecap="round"/>
<path d="M1408 563L1028 967" stroke="#e09a58" stroke-width="1.100" stroke-linecap="round"/>
<path d="M1021 976L1026 962L1035 970z" fill="#b8a838" stroke="#c87830"/>
</svg>
</body>
</html>
